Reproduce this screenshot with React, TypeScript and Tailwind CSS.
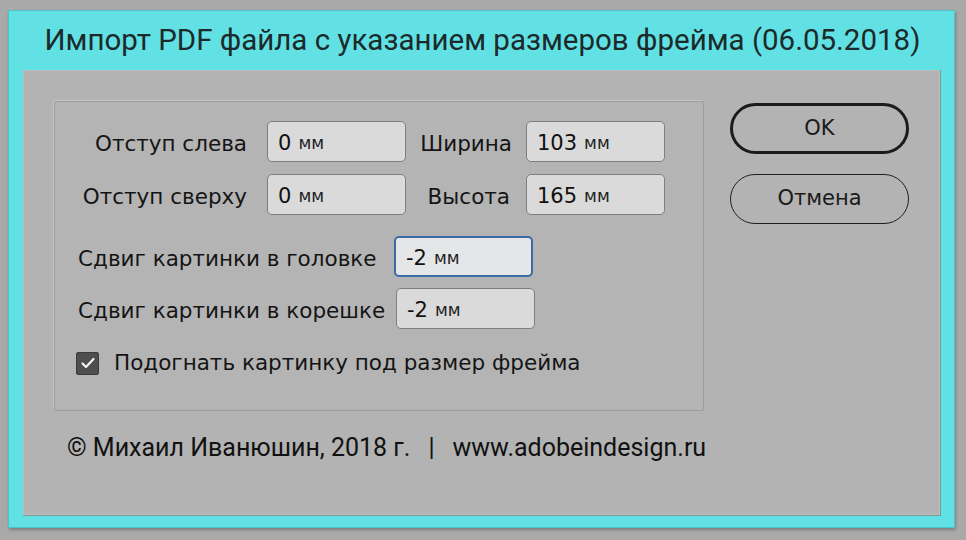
import React from "react";

const labelFont = { fontFamily: '"DejaVu Sans", "Noto Sans", sans-serif' };
const titleFont = { fontFamily: 'Roboto, "Liberation Sans", sans-serif' };

type FieldProps = {
  value: string;
  focused?: boolean;
};

const Field = ({ value, focused }: FieldProps) => {
  const [num] = value.split(" ");
  return (
    <div
      className={
        "flex h-[41px] w-[139px] items-center rounded-[5px] border px-[10px] pt-[3px] " +
        (focused
          ? "border-2 border-[#3b6aa6] bg-[#e4e6e8]"
          : "border-[#7f7f7f] bg-[#dadada]")
      }
    >
      <span className="text-[21px] leading-none text-[#111]">{num}</span>
      <span className="ml-[7px] text-[17px] leading-none text-[#222]">мм</span>
    </div>
  );
};

const App = () => {
  return (
    <div className="h-[540px] w-[966px] bg-[#a9a9a9] pl-[8px] pt-[10px]" style={labelFont}>
      <div className="flex h-[518px] w-[947px] flex-col border border-[#4cc4c9] bg-[#62e1e4] shadow-[1px_2px_3px_rgba(0,0,0,0.25)]">
        <div
          className="flex h-[59px] items-center justify-center pl-[2px] text-[29.5px] text-[#1c2a2b]"
          style={titleFont}
        >
          Импорт PDF файла с указанием размеров фрейма (06.05.2018)
        </div>
        <div className="ml-[14px] flex h-[446px] w-[918px] flex-col border-r border-b border-[#7c9a9c] bg-[#b3b3b3] shadow-[inset_0_0_0_1px_#bdbdbd]">
          <div className="flex pt-[31px]">
            {/* options group */}
            <div className="ml-[31px] h-[310px] w-[650px] rounded-[2px] border border-[#9c9c9c] bg-[#b4b4b4] shadow-[-1px_-1px_0_#c4c4c4]">
              <div className="mt-[19px] grid grid-cols-[212px_139px_120px_139px] items-center gap-y-[12px] text-[21.5px] text-[#141414]">
                <span className="pr-[20px] pt-[6px] text-right">Отступ слева</span>
                <Field value="0 мм" />
                <span className="pr-[14px] pt-[6px] text-right">Ширина</span>
                <Field value="103 мм" />
                <span className="pr-[20px] pt-[6px] text-right">Отступ сверху</span>
                <Field value="0 мм" />
                <span className="pr-[16px] pt-[6px] text-right">Высота</span>
                <Field value="165 мм" />
              </div>
              <div className="mt-[21px] flex items-center pl-[23px] text-[21.5px] text-[#141414]">
                <span className="w-[316px] pt-[6px]">Сдвиг картинки в головке</span>
                <Field value="-2 мм" focused />
              </div>
              <div className="mt-[11px] flex items-center pl-[23px] text-[21.5px] text-[#141414]">
                <span className="w-[318px] pt-[6px]">Сдвиг картинки в корешке</span>
                <Field value="-2 мм" />
              </div>
              <div className="mt-[18px] flex items-center pl-[21px] text-[21.5px] text-[#141414]">
                <span className="flex h-[23px] w-[23px] items-center justify-center rounded-[3px] bg-[#4e4e4e] shadow-[inset_0_0_0_1px_#3a3a3a]">
                  <svg width="16" height="16" viewBox="0 0 16 16" fill="none">
                    <path d="M2.5 8.5l3.5 3.5 7.5-8" stroke="#f2f2f2" strokeWidth="2.2" strokeLinecap="round" strokeLinejoin="round" />
                  </svg>
                </span>
                <span className="ml-[15px]">Подогнать картинку под размер фрейма</span>
              </div>
            </div>
            {/* buttons */}
            <div className="ml-[26px] mt-[2px] flex flex-col gap-[20px]">
              <button className="flex h-[51px] w-[179px] items-center justify-center rounded-full border-[3px] border-[#1b1b1b] text-[21px] text-[#1a1a1a]">
                OK
              </button>
              <button className="flex h-[50px] w-[179px] items-center justify-center rounded-full border-[1.5px] border-[#1f1f1f] text-[21px] text-[#1a1a1a]">
                Отмена
              </button>
            </div>
          </div>
          <div
            className="mt-[18px] flex items-center pl-[44px] text-[25px] text-[#111]"
            style={titleFont}
          >
            <span>© Михаил Иванюшин, 2018 г.</span>
            <span className="mx-[18px]">|</span>
            <span>www.adobeindesign.ru</span>
          </div>
        </div>
      </div>
    </div>
  );
};

export default App;
